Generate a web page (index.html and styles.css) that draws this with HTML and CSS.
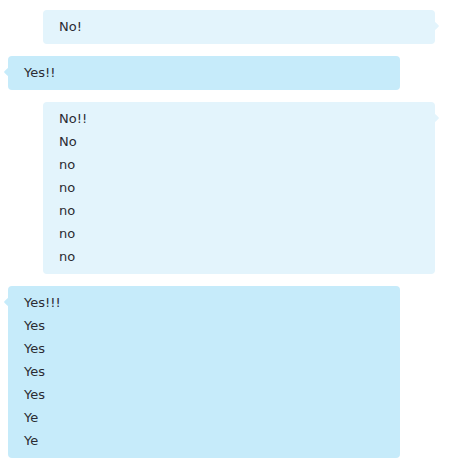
FILE: index.html
```html
<!DOCTYPE html>
<html lang="en">
<head>
    <meta charset="UTF-8">
    <title>Chat</title>
    <link rel="stylesheet" href="styles.css">
</head>
<body>
    <div class="chat">
        <div class="bubble bubble-me">
            <div>No!</div>
        </div>
        <div class="bubble bubble-them">
            <div>Yes!!</div>
        </div>
        <div class="bubble bubble-me">
            <div>No!!</div>
            <div>No</div>
            <div>no</div>
            <div>no</div>
            <div>no</div>
            <div>no</div>
            <div>no</div>
        </div>
        <div class="bubble bubble-them">
            <div>Yes!!!</div>
            <div>Yes</div>
            <div>Yes</div>
            <div>Yes</div>
            <div>Yes</div>
            <div>Ye</div>
            <div>Ye</div>
        </div>
    </div>
</body>
</html>
```

FILE: styles.css
```css
body {
    margin: 0;
    background-color: #fff;
    font-family: 'DejaVu Sans', Verdana, sans-serif;
    font-size: 13px;
    color: #2b2b33;
}

.chat {
    display: flex;
    flex-direction: column;
    gap: 12px;
    padding: 10px 8px;
}

.bubble {
    position: relative;
    width: 392px;
    box-sizing: border-box;
    padding: 5px 16px 6px;
    line-height: 23px;
    border-radius: 4px;
}

.bubble:before {
    content: "";
    position: absolute;
    top: 13px;
    width: 6px;
    height: 6px;
    border-radius: 1px;
    transform: rotate(45deg);
}

.bubble-me {
    align-self: flex-end;
    margin-right: 8px;
    background-color: #e3f4fc;
}

.bubble-me:before {
    right: -3px;
    background-color: #e3f4fc;
}

.bubble-them {
    align-self: flex-start;
    background-color: #c6ebfa;
}

.bubble-them:before {
    left: -3px;
    background-color: #c6ebfa;
}
```
